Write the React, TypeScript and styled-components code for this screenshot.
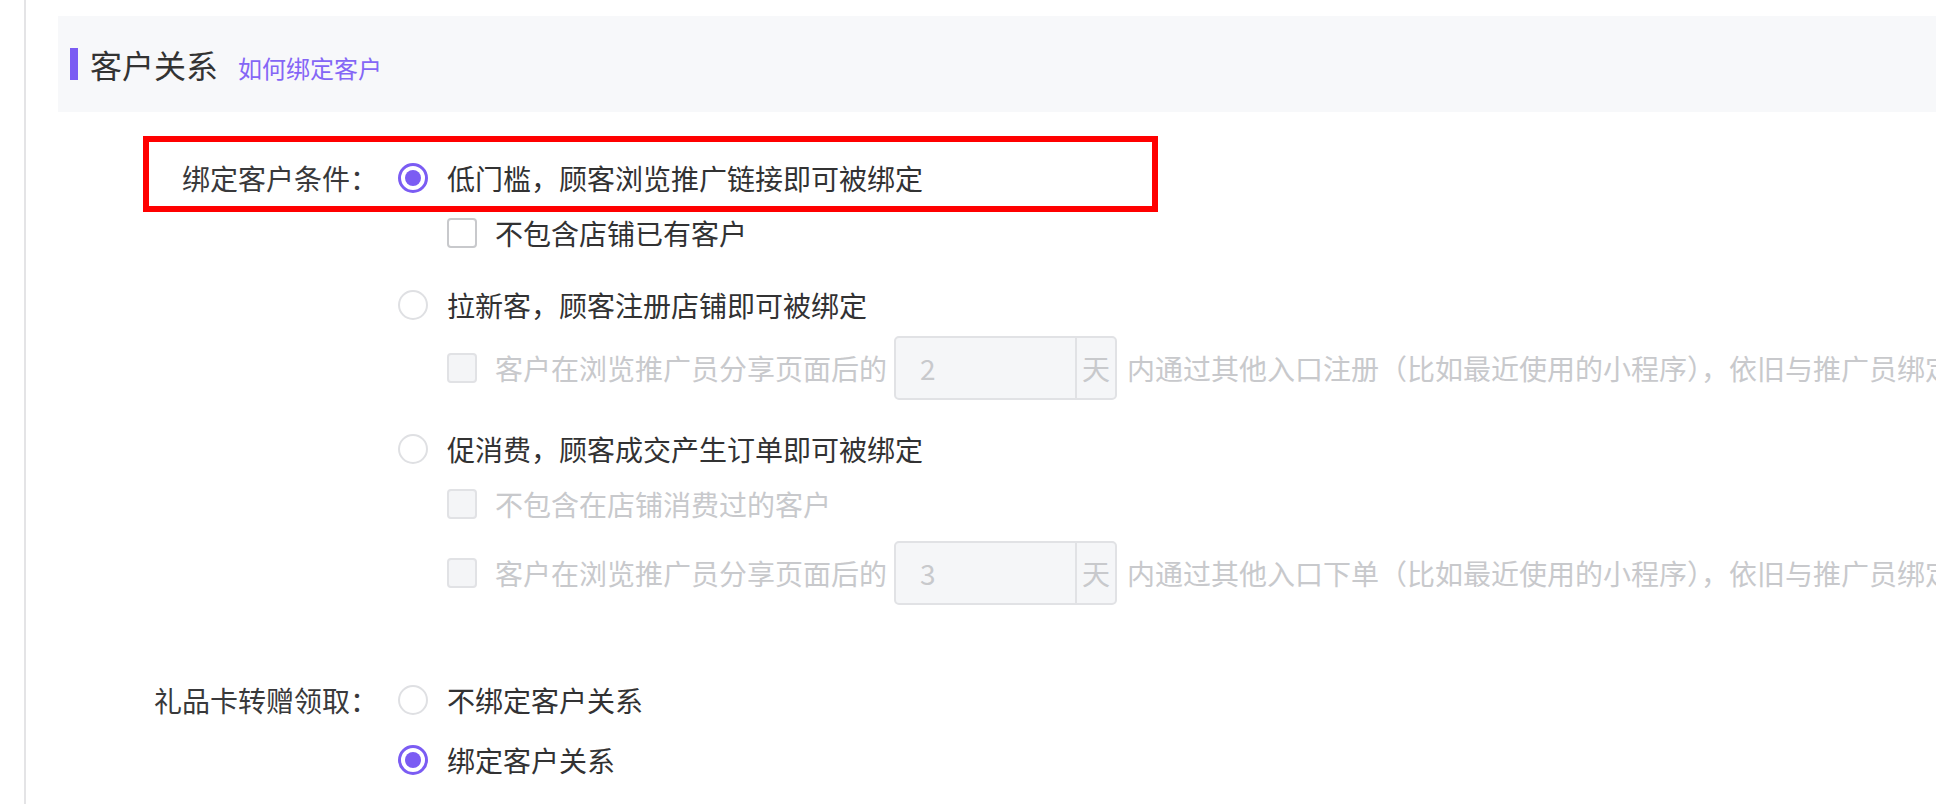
import React from 'react'
import styled, { createGlobalStyle } from 'styled-components'

const PURPLE = '#7b5cf3'

const GlobalStyle = createGlobalStyle`
  html, body {
    margin: 0;
    padding: 0;
    background: #fff;
    overflow: hidden;
  }
  body {
    font-family: "Noto Sans CJK SC", "Noto Sans", sans-serif;
    color: #323233;
  }
`

const Page = styled.div`
  height: 804px;
  padding-left: 24px;
  box-sizing: border-box;
`

const Content = styled.div`
  height: 100%;
  border-left: 2px solid #e4e4e6;
  padding: 16px 0 0 32px;
  box-sizing: border-box;
`

const SectionHeader = styled.div`
  display: flex;
  align-items: center;
  height: 96px;
  padding-left: 12px;
  background: #f7f8fa;
`

const Bar = styled.span`
  width: 8px;
  height: 32px;
  background: ${PURPLE};
  margin-right: 12px;
`

const TitleGroup = styled.div`
  display: flex;
  align-items: baseline;
`

const Title = styled.span`
  font-size: 32px;
  line-height: 40px;
  color: #333;
`

const HelpLink = styled.a`
  margin-left: 20px;
  font-size: 24px;
  color: #8466f6;
  text-decoration: none;
  cursor: pointer;
`

const Form = styled.div`
  margin-top: 46px;
`

const FormItem = styled.div<{ $mt?: number }>`
  position: relative;
  display: flex;
  margin-top: ${({ $mt }) => $mt ?? 0}px;
`

const Label = styled.div`
  flex-shrink: 0;
  width: 320px;
  margin-right: 20px;
  height: 40px;
  line-height: 40px;
  text-align: right;
  font-size: 28px;
  color: #39393b;
`

const Options = styled.div`
  display: flex;
  flex-direction: column;
`

const Line = styled.div<{ $mt?: number; $h?: number; $sub?: boolean }>`
  display: flex;
  align-items: center;
  height: ${({ $h }) => $h ?? 40}px;
  margin-top: ${({ $mt }) => $mt ?? 0}px;
  padding-left: ${({ $sub }) => ($sub ? 49 : 0)}px;
  white-space: nowrap;
  font-size: 28px;
`

const Radio = styled.span<{ $checked?: boolean }>`
  position: relative;
  flex-shrink: 0;
  width: 30px;
  height: 30px;
  box-sizing: border-box;
  border-radius: 50%;
  border: ${({ $checked }) =>
    $checked ? `3px solid ${PURPLE}` : '2px solid #dfe0e3'};
  background: #fff;
  margin-right: 19px;
  &::after {
    content: '';
    display: ${({ $checked }) => ($checked ? 'block' : 'none')};
    position: absolute;
    left: 50%;
    top: 50%;
    width: 16px;
    height: 16px;
    margin: -8px 0 0 -8px;
    border-radius: 50%;
    background: ${PURPLE};
  }
`

const Checkbox = styled.span<{ $disabled?: boolean }>`
  flex-shrink: 0;
  width: 30px;
  height: 30px;
  box-sizing: border-box;
  border-radius: 4px;
  border: 2px solid ${({ $disabled }) => ($disabled ? '#e1e2e5' : '#c8c9cc')};
  background: ${({ $disabled }) => ($disabled ? '#f4f5f7' : '#fff')};
  margin-right: 18px;
`

const Text = styled.span<{ $disabled?: boolean }>`
  line-height: 40px;
  color: ${({ $disabled }) => ($disabled ? '#c8c9cc' : '#323233')};
`

const InputGroup = styled.div`
  display: flex;
  flex-shrink: 0;
  width: 223px;
  height: 64px;
  box-sizing: border-box;
  margin: 0 10px 0 7px;
  border: 2px solid #e1e2e5;
  border-radius: 5px;
  background: #f5f6f8;
  color: #c8c9cc;
`

const InputValue = styled.span`
  flex: 1;
  padding-left: 24px;
  line-height: 60px;
`

const Addon = styled.span`
  width: 38px;
  border-left: 2px solid #e1e2e5;
  text-align: center;
  line-height: 60px;
`

const Highlight = styled.div`
  position: absolute;
  left: 85px;
  top: -22px;
  width: 1015px;
  height: 76px;
  box-sizing: border-box;
  border: 6px solid #ff0000;
  pointer-events: none;
`

const DelayLine = ({ days, rest, mt }: { days: number; rest: string; mt: number }) => (
  <Line $sub $h={64} $mt={mt}>
    <Checkbox $disabled />
    <Text $disabled>客户在浏览推广员分享页面后的</Text>
    <InputGroup>
      <InputValue>{days}</InputValue>
      <Addon>天</Addon>
    </InputGroup>
    <Text $disabled>{rest}</Text>
  </Line>
)

export default function App() {
  return (
    <>
      <GlobalStyle />
      <Page>
        <Content>
          <SectionHeader>
            <Bar />
            <TitleGroup>
              <Title>客户关系</Title>
              <HelpLink>如何绑定客户</HelpLink>
            </TitleGroup>
          </SectionHeader>

          <Form>
            <FormItem>
              <Highlight />
              <Label>绑定客户条件：</Label>
              <Options>
                <Line>
                  <Radio $checked />
                  <Text>低门槛，顾客浏览推广链接即可被绑定</Text>
                </Line>
                <Line $sub $mt={15}>
                  <Checkbox />
                  <Text>不包含店铺已有客户</Text>
                </Line>

                <Line $mt={32}>
                  <Radio />
                  <Text>拉新客，顾客注册店铺即可被绑定</Text>
                </Line>
                <DelayLine
                  days={2}
                  mt={11}
                  rest="内通过其他入口注册（比如最近使用的小程序），依旧与推广员绑定"
                />

                <Line $mt={29}>
                  <Radio />
                  <Text>促消费，顾客成交产生订单即可被绑定</Text>
                </Line>
                <Line $sub $mt={15}>
                  <Checkbox $disabled />
                  <Text $disabled>不包含在店铺消费过的客户</Text>
                </Line>
                <DelayLine
                  days={3}
                  mt={17}
                  rest="内通过其他入口下单（比如最近使用的小程序），依旧与推广员绑定"
                />
              </Options>
            </FormItem>

            <FormItem $mt={75}>
              <Label>礼品卡转赠领取：</Label>
              <Options>
                <Line>
                  <Radio />
                  <Text>不绑定客户关系</Text>
                </Line>
                <Line $mt={20}>
                  <Radio $checked />
                  <Text>绑定客户关系</Text>
                </Line>
              </Options>
            </FormItem>
          </Form>
        </Content>
      </Page>
    </>
  )
}
